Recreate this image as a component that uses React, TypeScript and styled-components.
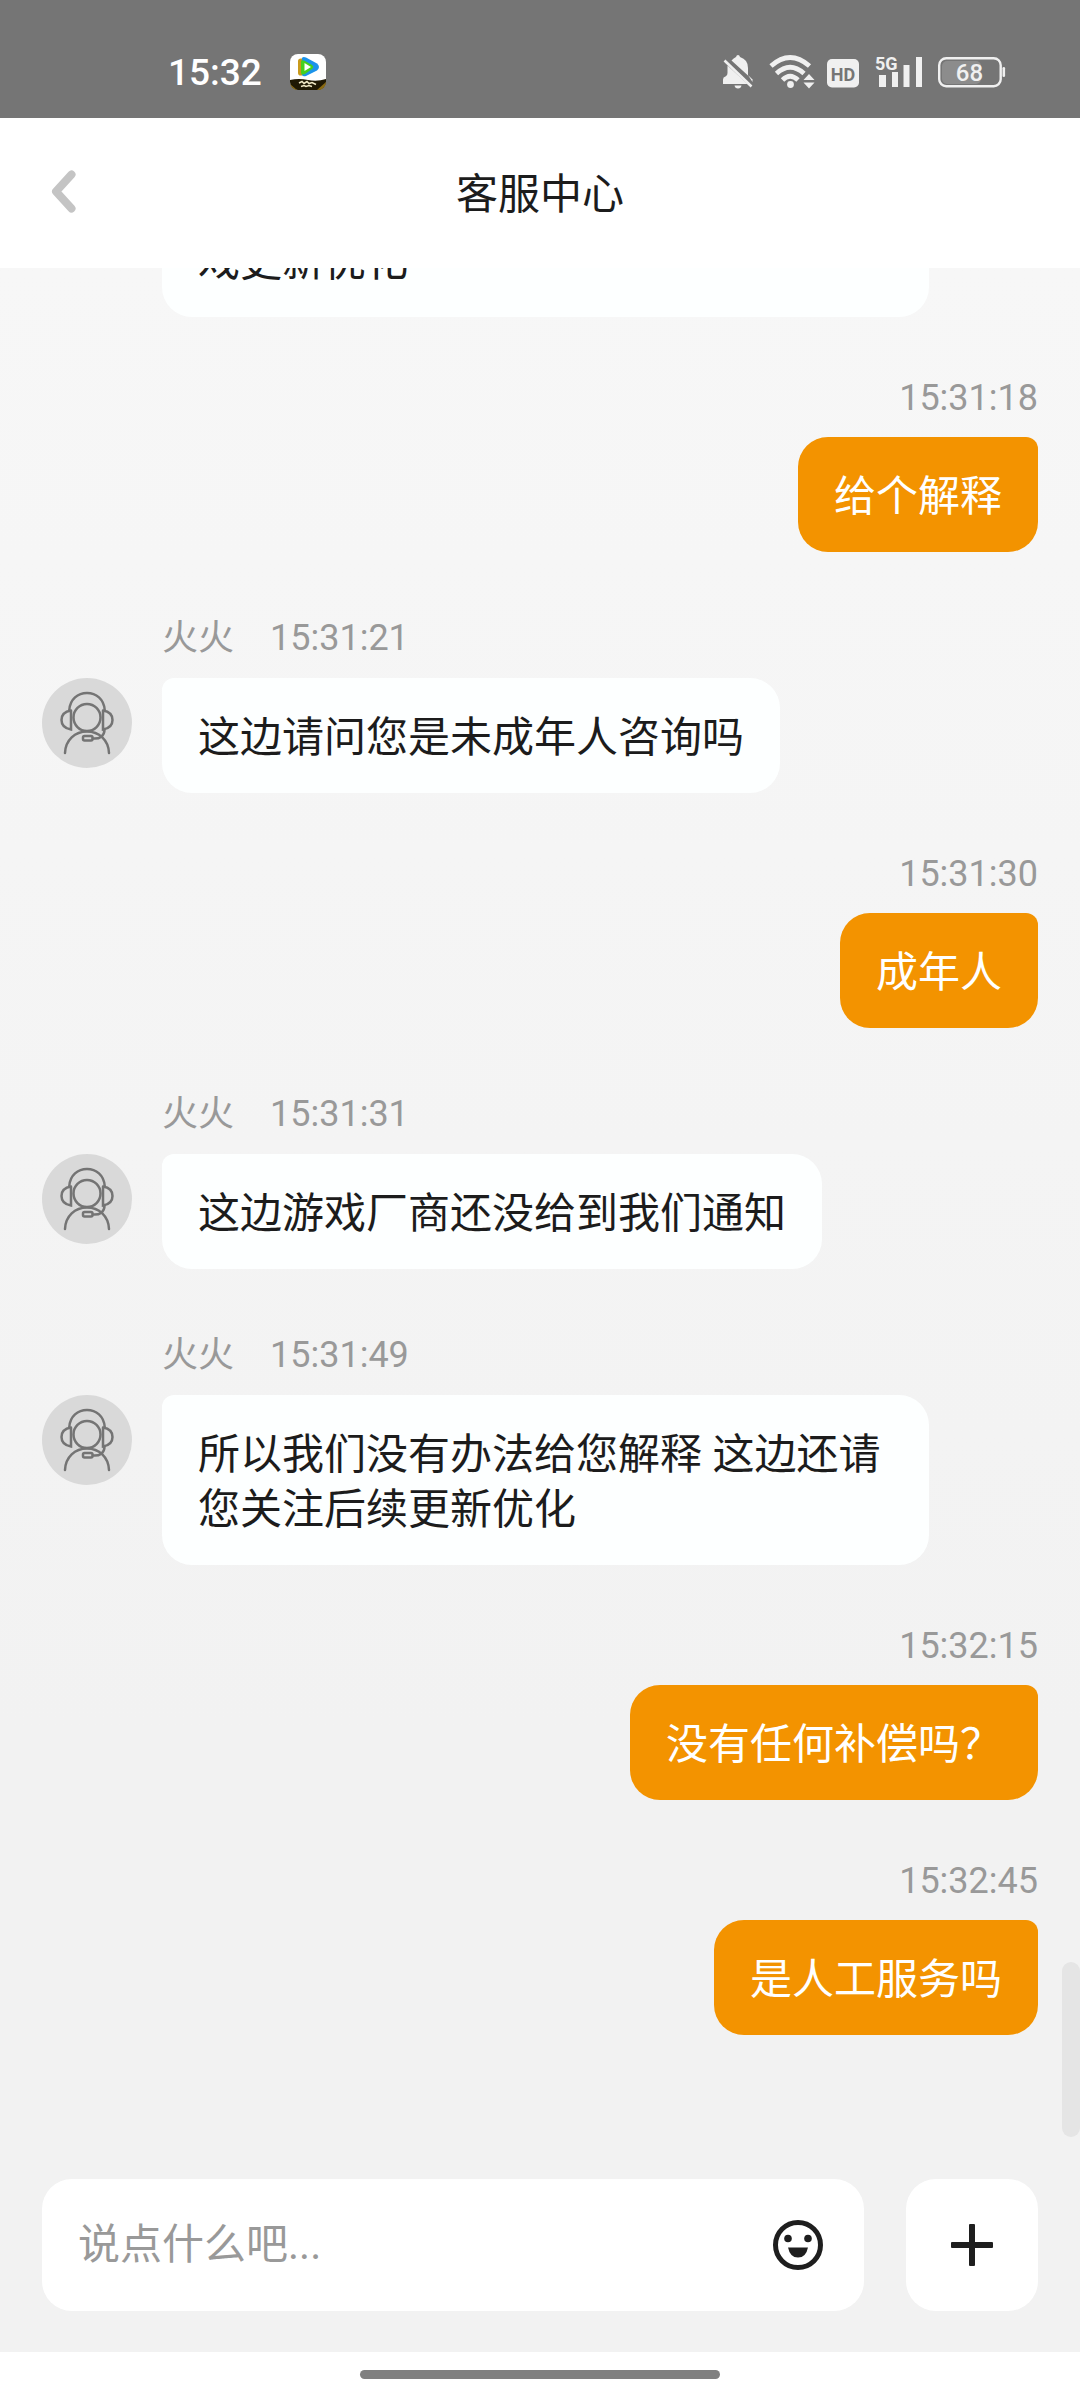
import React from "react";
import styled, { createGlobalStyle } from "styled-components";

const GlobalStyle = createGlobalStyle`
  *, *::before, *::after { box-sizing: border-box; }
  body {
    margin: 0;
    background: #fff;
    color: #1c1c1c;
    font-family: Roboto, "Noto Sans CJK SC", sans-serif;
  }
  button, input { font: inherit; color: inherit; }
`;

const Screen = styled.div`
  display: flex;
  flex-direction: column;
  height: 100vh;
`;

const StatusBar = styled.div`
  flex: none;
  display: flex;
  align-items: center;
  justify-content: space-between;
  padding: 26px 74px 0 168px;
  height: 118px;
  background: #757575;
  color: #f0f0f0;
`;

const StatusGroup = styled.div`
  display: flex;
  align-items: center;
  gap: 28px;

  svg { display: block; }
`;

const Clock = styled.time`
  padding-top: 2px;
  font-size: 37px;
  line-height: 44px;
  font-weight: 500;
  color: #fff;
`;

const Header = styled.header`
  flex: none;
  display: grid;
  grid-template-columns: 84px 1fr 84px;
  align-items: center;
  padding: 0 21px;
  height: 150px;
  background: #fff;
`;

const Title = styled.h1`
  margin: 0;
  padding-top: 4px;
  text-align: center;
  font-size: 42px;
  line-height: 56px;
  font-weight: 400;
`;

const IconButton = styled.button`
  display: flex;
  align-items: center;
  justify-content: center;
  width: 84px;
  height: 84px;
  padding: 0;
  border: 0;
  background: none;
`;

const Body = styled.div`
  flex: 1;
  min-height: 0;
  display: flex;
  flex-direction: column;
  background: linear-gradient(#f7f7f7, #f2f2f2 70%);
`;

const Conversation = styled.main`
  position: relative;
  flex: 1;
  min-height: 0;
  display: flex;
  flex-direction: column;
  justify-content: flex-end;
  padding: 0 42px 102px;
  overflow: hidden;
`;

const ScrollThumb = styled.div`
  position: absolute;
  right: 0;
  bottom: 0;
  width: 18px;
  height: 175px;
  border-radius: 9px;
  background: #e5e5e5;
`;

const UserMessage = styled.article`
  flex: none;
  display: flex;
  flex-direction: column;
  align-items: flex-end;
  gap: 17px;
  padding-top: 59px;
`;

const AgentMessage = styled.article`
  flex: none;
  display: grid;
  grid-template-columns: 90px 1fr;
  justify-items: start;
  column-gap: 30px;
  row-gap: 18px;
  padding: 64px 109px 0 0;
`;

const Meta = styled.div`
  grid-column: 2;
  display: flex;
  gap: 36px;
  height: 44px;
  font-size: 36px;
  line-height: 44px;
  color: #999;
`;

const Bubble = styled.p<{ $own?: boolean; $full?: boolean }>`
  grid-column: 2;
  margin: 0;
  width: ${(p) => (p.$full ? "100%" : "auto")};
  padding: 32px 36px 28px;
  border-radius: ${(p) => (p.$own ? "30px 12px 30px 30px" : "12px 30px 30px 30px")};
  background: ${(p) => (p.$own ? "#f39300" : "#fdffff")};
  color: ${(p) => (p.$own ? "#fff" : "#1c1c1c")};
  font-size: 42px;
  line-height: 55px;
`;

const Avatar = styled.svg`
  display: block;
  width: 90px;
  height: 90px;
`;

const Composer = styled.form`
  flex: none;
  display: flex;
  gap: 42px;
  padding: 42px 42px 41px;
`;

const Field = styled.div`
  flex: 1;
  display: flex;
  align-items: center;
  height: 132px;
  padding: 0 24px 0 36px;
  border-radius: 30px;
  background: #fff;
`;

const TextInput = styled.input`
  flex: 1;
  min-width: 0;
  padding: 0;
  border: 0;
  outline: 0;
  background: none;
  font-size: 42px;
  line-height: 56px;

  &::placeholder { color: #999; opacity: 1; }
`;

const AddButton = styled.button`
  display: flex;
  align-items: center;
  justify-content: center;
  width: 132px;
  height: 132px;
  padding: 0;
  border: 0;
  border-radius: 30px;
  background: #fff;
`;

const NavArea = styled.div`
  flex: none;
  display: flex;
  align-items: center;
  justify-content: center;
  height: 48px;
  padding-bottom: 3px;
  background: #fff;
`;

const HomeBar = styled.div`
  width: 33.3333%;
  height: 9px;
  border-radius: 5px;
  background: #808080;
`;

type Message = { from: "agent" | "user"; time: string; text: string };

const messages: Message[] = [
  { from: "user", time: "15:31:18", text: "给个解释" },
  { from: "agent", time: "15:31:21", text: "这边请问您是未成年人咨询吗" },
  { from: "user", time: "15:31:30", text: "成年人" },
  { from: "agent", time: "15:31:31", text: "这边游戏厂商还没给到我们通知" },
  { from: "agent", time: "15:31:49", text: "所以我们没有办法给您解释 这边还请您关注后续更新优化" },
  { from: "user", time: "15:32:15", text: "没有任何补偿吗？" },
  { from: "user", time: "15:32:45", text: "是人工服务吗" },
];

function AgentAvatar() {
  return (
    <Avatar viewBox="0 0 90 90" fill="none" stroke="#747474" strokeWidth="2.500" strokeLinecap="round" aria-hidden="true">
      <circle cx="45" cy="45" r="45" fill="#d9d9d9" stroke="none" />
      <path d="M27.300 32C28 21 36 15 45 15S62 21 62.700 32" />
      <circle cx="45" cy="39.500" r="13.500" />
      <path d="M29 33V51.500C23 50.500 19.500 47 19.500 42S23 33.500 29 32.500" />
      <path d="M61 33V51.500C67 50.500 70.500 47 70.500 42S67 33.500 61 32.500" />
      <path d="M23 75C23.500 62 33 53.500 45 53.500S66.500 62 67 75" />
      <rect x="41" y="58" width="9.500" height="4.500" rx="1.500" />
      <path d="M51 60.500C58 61 62.500 58 62.500 51.500" />
    </Avatar>
  );
}

function AppIcon() {
  return (
    <svg width="36" height="36" viewBox="0 0 36 36" aria-hidden="true">
      <clipPath id="tile"><rect width="36" height="36" rx="8" /></clipPath>
      <g clipPath="url(#tile)">
        <rect width="36" height="36" fill="#fff" />
        <path d="M8 7Q8 4 12 4.500L15 7V20L12 21.500Q8 22 8 19Z" fill="#c99a1c" />
        <path d="M12 4Q13 2.500 16 3.500L27 9.500Q31 13 27 16.500L16 22Q13 23 12 21Z" fill="#1c93ea" />
        <path d="M11 7Q12 5.500 15 7L22 11Q24.500 13 22 15L15 20Q11.500 21.500 11 19Z" fill="#45d01f" />
        <path d="M14.500 9L21 13L14.500 17Z" fill="#fff" />
        <path d="M0 26Q9 24 18 26T36 25V36H0Z" fill="#1f1804" />
        <path d="M9 29l3-1.500 2 2 3-2 2 2 3-1 4 2M11 32.500l3-1 2 1 3-1 3 1" fill="none" stroke="#eee6c4" strokeWidth="1.600" />
        <path d="M0 30L7 36H0ZM36 28L27 36H36Z" fill="#8a6a12" />
      </g>
    </svg>
  );
}

function StatusIcons() {
  return (
    <svg width="284" height="36" viewBox="722 54 284 36" fill="#f0f0f0" aria-hidden="true">
      <path d="M738 55Q739.500 55 740 57Q748 59.500 748 68V75.500L731.500 60.500Q733.500 58 736 57Q736.500 55 738 55Z" />
      <path d="M727.500 65.500L747.500 84H723V79.500Q723 77 725.500 76.500Q727.500 76 727.500 73Z" />
      <path d="M748 75L752.500 79.500V82Z" />
      <path d="M724.500 60.500L751.500 86.500" stroke="#f0f0f0" strokeWidth="2.600" />
      <path d="M734.500 85.500H741.500Q741 88.500 738 88.500T734.500 85.500Z" />
      <g fill="none" stroke="#f0f0f0" strokeWidth="4.800">
        <path d="M771 66Q790 49 809.500 66" />
        <path d="M776.500 73.500Q790 61 804 73.500" />
        <path d="M782.500 80Q790 72.500 798 80" />
      </g>
      <circle cx="790.500" cy="84.500" r="3.400" />
      <path d="M809 74L814.500 80H803.500ZM809 88.500L814.500 82.500H803.500Z" />
      <rect x="827" y="59" width="32" height="28.500" rx="5" />
      <text x="843" y="81" textAnchor="middle" fontFamily="Roboto, sans-serif" fontSize="18" fontWeight="700" fill="#757575">HD</text>
      <text x="875" y="70" fontFamily="Roboto, sans-serif" fontSize="18" fontWeight="700">5G</text>
      <path d="M879 75h7v12h-7ZM892 72h6v15h-6ZM903.500 65h6v22h-6ZM916 57h6v30h-6Z" />
      <rect x="942" y="61" width="39" height="23" rx="5" fill="#8c8c8c" />
      <rect x="939.200" y="58.200" width="61.500" height="28" rx="7" fill="none" stroke="#f0f0f0" strokeWidth="2.400" />
      <rect x="1002.500" y="67" width="2.600" height="10" rx="1.300" />
      <text x="969.500" y="81" textAnchor="middle" fontFamily="Roboto, sans-serif" fontSize="24" fontWeight="500">68</text>
    </svg>
  );
}

export default function App() {
  return (
    <Screen>
      <GlobalStyle />
      <StatusBar>
        <StatusGroup>
          <Clock>15:32</Clock>
          <AppIcon />
        </StatusGroup>
        <StatusGroup>
          <StatusIcons />
        </StatusGroup>
      </StatusBar>
      <Header>
        <IconButton type="button" aria-label="返回">
          <svg width="28" height="46" viewBox="0 0 28 46" fill="none" stroke="#c4c4c4" strokeWidth="8" strokeLinecap="round" strokeLinejoin="round">
            <path d="M22.500 4.500L7 21.500L22.500 38.500" />
          </svg>
        </IconButton>
        <Title>客服中心</Title>
      </Header>
      <Body>
        <Conversation>
          <AgentMessage>
            <Bubble $full>戏更新优化</Bubble>
          </AgentMessage>
          {messages.map((m) =>
            m.from === "user" ? (
              <UserMessage key={m.time}>
                <Meta><time>{m.time}</time></Meta>
                <Bubble $own>{m.text}</Bubble>
              </UserMessage>
            ) : (
              <AgentMessage key={m.time}>
                <Meta><span>火火</span><time>{m.time}</time></Meta>
                <AgentAvatar />
                <Bubble>{m.text}</Bubble>
              </AgentMessage>
            )
          )}
          <ScrollThumb />
        </Conversation>
        <Composer onSubmit={(e) => e.preventDefault()}>
          <Field>
            <TextInput type="text" aria-label="消息" placeholder="说点什么吧..." />
            <IconButton type="button" aria-label="表情">
              <svg width="52" height="52" viewBox="-26 -26 52 52" fill="#1e1e1e">
                <circle r="22.500" fill="none" stroke="#1e1e1e" strokeWidth="5" />
                <circle cx="-10" cy="-6.500" r="3.800" />
                <circle cx="10" cy="-6.500" r="3.800" />
                <path d="M-10 2.500H10Q8 12.500 0 12.500T-10 2.500Z" />
              </svg>
            </IconButton>
          </Field>
          <AddButton type="button" aria-label="更多">
            <svg width="42" height="42" viewBox="0 0 42 42" fill="#1e1e1e">
              <rect x="18" width="6" height="42" rx="1" />
              <rect y="18" width="42" height="6" rx="1" />
            </svg>
          </AddButton>
        </Composer>
      </Body>
      <NavArea><HomeBar /></NavArea>
    </Screen>
  );
}
